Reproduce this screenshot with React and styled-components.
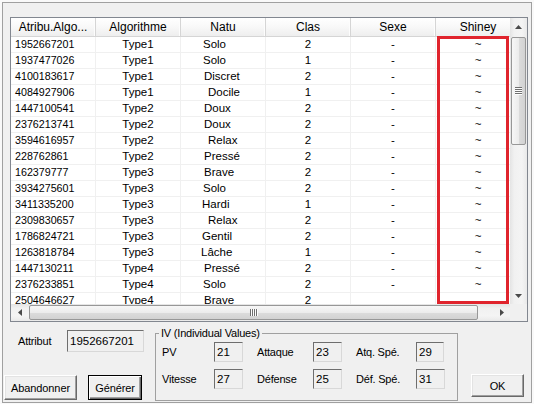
import React from "react";
import styled, {createGlobalStyle, css} from "styled-components";

const GlobalStyle = createGlobalStyle`
  html, body {
    margin: 0;
    padding: 0;
  }
  body {
    width: 534px;
    height: 404px;
    overflow: hidden;
    background: #f9f9f9;
    font-family: "Liberation Sans", Arial, sans-serif;
    color: #000;
  }
`

const Frame = styled.div`
  box-sizing: border-box;
  margin: 2px 0 0 2px;
  width: 530px;
  height: 401px;
  border: 1px solid #a0a0a0;
  background: #f0f0f0;
  display: flex;
  flex-direction: column;
`

// ---- list view ----
const ListView = styled.div`
  position: relative;
  box-sizing: border-box;
  margin: 14px 0 0 7px;
  width: 518px;
  height: 305px;
  border: 1px solid #828790;
  background: #fff;
  display: grid;
  grid-template-columns: 499px 17px;
  grid-template-rows: 286px 17px;
`
const Viewport = styled.div`
  overflow: hidden;
`
const Table = styled.div`
  width: 510px;
`
const HeaderRow = styled.div`
  display: flex;
  height: 19px;
  box-sizing: border-box;
  border-bottom: 1px solid #d5d5d5;
  background: linear-gradient(#ffffff, #f9f9f9 45%, #eeeeee);
`
const HeaderCell = styled.div`
  flex: 0 0 85px;
  box-sizing: border-box;
  border-right: 1px solid #d5d5d5;
  box-shadow: inset -1px 0 #fdfdfd;
  text-align: center;
  font-size: 12px;
  line-height: 18px;
  white-space: nowrap;
  overflow: hidden;
`
const Row = styled.div`
  display: flex;
  height: 16px;
  box-sizing: border-box;
  border-bottom: 1px solid #f0f0f0;
`
const Cell = styled.div`
  flex: 0 0 85px;
  box-sizing: border-box;
  border-right: 1px solid #f0f0f0;
  font-size: ${(p) => p.$size || 11.5}px;
  line-height: 15px;
  white-space: nowrap;
  overflow: hidden;
  text-align: ${(p) => p.$align || "center"};
  padding-left: ${(p) => p.$indent || 0}px;
`
const Highlight = styled.div`
  position: absolute;
  left: 426px;
  top: 18px;
  width: 72px;
  height: 268px;
  box-sizing: border-box;
  border: 3px solid #e0242d;
  pointer-events: none;
`

// ---- scrollbars ----
const VScroll = styled.div`
  display: flex;
  flex-direction: column;
  background: linear-gradient(90deg, #e4e4e4, #f1f1f1 25%, #f4f4f4 70%, #e9e9e9);
`
const HScroll = styled.div`
  display: flex;
  background: linear-gradient(#e4e4e4, #f1f1f1 25%, #f4f4f4 70%, #e9e9e9);
`
const ArrowBox = styled.div`
  flex: 0 0 17px;
  height: 17px;
  display: flex;
  align-items: center;
  justify-content: center;
`
const VThumb = styled.div`
  margin: 2px 1px 0 1px;
  height: 108px;
  box-sizing: border-box;
  border: 1px solid #979797;
  border-radius: 2px;
  background: linear-gradient(90deg, #f7f7f7, #ececec 50%, #dcdcdc 51%, #d2d2d2);
  display: flex;
  align-items: center;
  justify-content: center;
`
const HThumb = styled.div`
  margin: 1px 0 1px 1px;
  width: 449px;
  box-sizing: border-box;
  border: 1px solid #979797;
  border-radius: 2px;
  background: linear-gradient(#f7f7f7, #ececec 50%, #dcdcdc 51%, #d2d2d2);
  display: flex;
  align-items: center;
  justify-content: center;
`
const Grip = styled.div`
  width: ${(p) => (p.$vertical ? 7 : 8)}px;
  height: ${(p) => (p.$vertical ? 8 : 7)}px;
  background: repeating-linear-gradient(
    ${(p) => (p.$vertical ? "180deg" : "90deg")},
    #6f6f6f 0 1px,
    #fdfdfd 1px 2px
  );
`
const Spacer = styled.div`
  flex: 1;
`
const Corner = styled.div`
  background: #f0f0f0;
`

const Arrow = ({dir}) => {
    const pts = {
        up: "0,4 3.5,0 7,4",
        down: "0,0 3.5,4 7,0",
        left: "4,0 0,3.5 4,7",
        right: "0,0 4,3.5 0,7",
    }[dir];
    const w = dir === "up" || dir === "down" ? 7 : 4;
    const h = dir === "up" || dir === "down" ? 4 : 7;
    return (
        <svg width={w} height={h} viewBox={`0 0 ${w} ${h}`}>
            <polygon points={pts} fill="#4a4a4a"/>
        </svg>
    );
}

// ---- bottom part ----
const Bottom = styled.div`
  display: flex;
  align-items: flex-start;
  padding-left: 1px;
`
const LeftCol = styled.div`
  width: 140px;
  display: flex;
  flex-direction: column;
`
const AttribRow = styled.div`
  margin-top: 8px;
  height: 22px;
  display: flex;
  align-items: center;
`
const Label = styled.span`
  font-size: 11px;
  letter-spacing: -0.2px;
  white-space: nowrap;
  margin-left: ${(p) => p.$offset || 0}px;
`
const Field = styled.div`
  box-sizing: border-box;
  width: ${(p) => p.$w}px;
  height: ${(p) => p.$h}px;
  margin-left: ${(p) => (p.$push ? "auto" : "0")};
  border: 1px solid;
  border-color: #6e6e6e #d8d8d8 #d8d8d8 #6e6e6e;
  background: #f0f0f0;
  padding-left: 2px;
  font-size: 11.5px;
  line-height: ${(p) => p.$h - 2}px;
`
const ButtonRow = styled.div`
  margin-top: 23px;
  display: flex;
  gap: 11px;
`
const Button = styled.button`
  box-sizing: border-box;
  width: ${(p) => p.$w}px;
  height: ${(p) => p.$h || 25}px;
  margin: ${(p) => p.$margin || 0};
  padding: 0;
  font-family: inherit;
  font-size: 11px;
  letter-spacing: -0.1px;
  color: #000;
  background: #f0f0f0;
  border: 1px solid;
  border-color: #ffffff #696969 #696969 #ffffff;
  box-shadow: inset -1px -1px #a0a0a0, inset 1px 1px #e3e3e3;
  ${(p) => p.$default && css`
    border-color: #000;
    box-shadow: inset 1px 1px #fff, inset -1px -1px #696969, inset -2px -2px #a0a0a0;
  `}
`
const GroupBox = styled.fieldset`
  margin: 5px 0 0 11px;
  width: 303px;
  box-sizing: border-box;
  padding: 3px 0 11px 6px;
  border: 1px solid #a0a0a0;
  min-width: 0;
`
const Legend = styled.legend`
  font-size: 11px;
  letter-spacing: -0.2px;
  line-height: 12px;
  padding: 0 2px;
  margin-left: -3px;
`
const IVGrid = styled.div`
  display: grid;
  grid-template-columns: 38px 29px 42px 29px 46px 28px;
  column-gap: 14px;
  row-gap: 7px;
  align-items: center;
`

const rows = [
    ["1952667201", "Type1", "Solo", "2"],
    ["1937477026", "Type1", "Solo", "1"],
    ["4100183617", "Type1", "Discret", "2"],
    ["4084927906", "Type1", "Docile", "1"],
    ["1447100541", "Type2", "Doux", "2"],
    ["2376213741", "Type2", "Doux", "2"],
    ["3594616957", "Type2", "Relax", "2"],
    ["228762861", "Type2", "Pressé", "2"],
    ["162379777", "Type3", "Brave", "2"],
    ["3934275601", "Type3", "Solo", "2"],
    ["3411335200", "Type3", "Hardi", "1"],
    ["2309830657", "Type3", "Relax", "2"],
    ["1786824721", "Type3", "Gentil", "2"],
    ["1263818784", "Type3", "Lâche", "1"],
    ["1447130211", "Type4", "Pressé", "2"],
    ["2376233851", "Type4", "Solo", "2"],
    ["2504646627", "Type4", "Brave", "2", true],
];

// the Natu column is not really centered in the original
const natuIndent = {
    Solo: 22, Discret: 23, Docile: 27, Doux: 23, Relax: 27,
    "Pressé": 23, Brave: 23, Hardi: 21, Gentil: 21, "Lâche": 20,
};

const headers = ["Atribu.Algo...", "Algorithme", "Natu", "Clas", "Sexe", "Shiney"];

const ivValues = [
    ["PV", "21", "Attaque", "23", "Atq. Spé.", "29"],
    ["Vitesse", "27", "Défense", "25", "Déf. Spé.", "31"],
];

const App = () => {
    return (
        <>
            <GlobalStyle/>
            <Frame>
                <ListView>
                    <Viewport>
                        <Table>
                            <HeaderRow>
                                {headers.map((h) => <HeaderCell key={h}>{h}</HeaderCell>)}
                            </HeaderRow>
                            {rows.map(([id, algo, natu, clas, partial]) => (
                                <Row key={id}>
                                    <Cell $align="left" $indent={4} $size={10.7}>{id}</Cell>
                                    <Cell>{algo}</Cell>
                                    <Cell $align="left" $indent={natuIndent[natu]}>{natu}</Cell>
                                    <Cell>{clas}</Cell>
                                    <Cell>{partial ? "" : "-"}</Cell>
                                    <Cell>{partial ? "" : "~"}</Cell>
                                </Row>
                            ))}
                        </Table>
                    </Viewport>
                    <VScroll>
                        <ArrowBox><Arrow dir="up"/></ArrowBox>
                        <VThumb><Grip $vertical/></VThumb>
                        <Spacer/>
                        <ArrowBox><Arrow dir="down"/></ArrowBox>
                    </VScroll>
                    <HScroll>
                        <ArrowBox><Arrow dir="left"/></ArrowBox>
                        <HThumb><Grip/></HThumb>
                        <Spacer/>
                        <ArrowBox><Arrow dir="right"/></ArrowBox>
                    </HScroll>
                    <Corner/>
                    <Highlight/>
                </ListView>

                <Bottom>
                    <LeftCol>
                        <AttribRow>
                            <Label $offset={14}>Attribut</Label>
                            <Field $w={77} $h={22} $push>1952667201</Field>
                        </AttribRow>
                        <ButtonRow>
                            <Button $w={73}>Abandonner</Button>
                            <Button $w={54} $default>Générer</Button>
                        </ButtonRow>
                    </LeftCol>

                    <GroupBox>
                        <Legend>IV (Individual Values)</Legend>
                        <IVGrid>
                            {ivValues.flat().map((v, i) =>
                                i % 2 === 0
                                    ? <Label key={i}>{v}</Label>
                                    : <Field key={i} $w={i === 5 ? 28 : 29} $h={20}>{v}</Field>
                            )}
                        </IVGrid>
                    </GroupBox>

                    <Button $w={53} $h={23} $margin="52px 0 0 13px">OK</Button>
                </Bottom>
            </Frame>
        </>
    );
}
export default App;
